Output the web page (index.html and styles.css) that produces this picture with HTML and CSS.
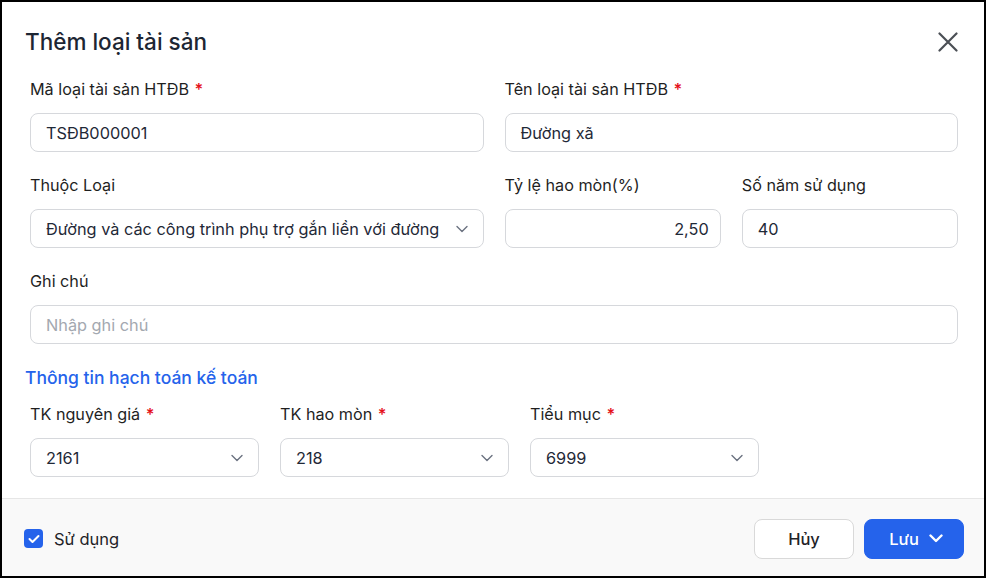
FILE: index.html
```html
<!DOCTYPE html>
<html lang="vi">
<head>
<meta charset="utf-8">
<title>Thêm loại tài sản</title>
<link rel="stylesheet" href="styles.css">
</head>
<body>
<div class="dialog">
  <div class="dlg-head">
    <h1 class="dlg-title">Thêm loại tài sản</h1>
    <span class="dlg-close">
      <svg width="20" height="20" viewBox="0 0 20 20"><path d="M1.5 1.5L18.5 18.5M18.5 1.5L1.5 18.5" stroke="#4b4f55" stroke-width="2.2" stroke-linecap="round"/></svg>
    </span>
  </div>

  <div class="dlg-body">
    <div class="grid4">
      <div class="field span2">
        <label class="lbl">Mã loại tài sản HTĐB <i class="req">*</i></label>
        <div class="inp">TSĐB000001</div>
      </div>
      <div class="field span2">
        <label class="lbl">Tên loại tài sản HTĐB <i class="req">*</i></label>
        <div class="inp">Đường xã</div>
      </div>

      <div class="field span2">
        <label class="lbl">Thuộc Loại</label>
        <div class="inp sel">
          <span>Đường và các công trình phụ trợ gắn liền với đường</span>
          <svg class="chev" width="12" height="8" viewBox="0 0 12 8"><path d="M1 1.5L6 6.5L11 1.5" fill="none" stroke="#6b7280" stroke-width="1.4" stroke-linecap="round" stroke-linejoin="round"/></svg>
        </div>
      </div>
      <div class="field">
        <label class="lbl">Tỷ lệ hao mòn(%)</label>
        <div class="inp num">2,50</div>
      </div>
      <div class="field">
        <label class="lbl">Số năm sử dụng</label>
        <div class="inp">40</div>
      </div>

      <div class="field span4">
        <label class="lbl">Ghi chú</label>
        <div class="inp ph">Nhập ghi chú</div>
      </div>
    </div>

    <h2 class="sec-title">Thông tin hạch toán kế toán</h2>

    <div class="row3">
      <div class="field">
        <label class="lbl">TK nguyên giá <i class="req">*</i></label>
        <div class="inp sel">
          <span>2161</span>
          <svg class="chev" width="12" height="8" viewBox="0 0 12 8"><path d="M1 1.5L6 6.5L11 1.5" fill="none" stroke="#6b7280" stroke-width="1.4" stroke-linecap="round" stroke-linejoin="round"/></svg>
        </div>
      </div>
      <div class="field">
        <label class="lbl">TK hao mòn <i class="req">*</i></label>
        <div class="inp sel">
          <span>218</span>
          <svg class="chev" width="12" height="8" viewBox="0 0 12 8"><path d="M1 1.5L6 6.5L11 1.5" fill="none" stroke="#6b7280" stroke-width="1.4" stroke-linecap="round" stroke-linejoin="round"/></svg>
        </div>
      </div>
      <div class="field">
        <label class="lbl">Tiểu mục <i class="req">*</i></label>
        <div class="inp sel">
          <span>6999</span>
          <svg class="chev" width="12" height="8" viewBox="0 0 12 8"><path d="M1 1.5L6 6.5L11 1.5" fill="none" stroke="#6b7280" stroke-width="1.4" stroke-linecap="round" stroke-linejoin="round"/></svg>
        </div>
      </div>
    </div>
  </div>

  <div class="dlg-foot">
    <label class="chk">
      <span class="box">
        <svg width="12" height="10" viewBox="0 0 12 10"><path d="M1.5 5L4.5 8L10.5 2" fill="none" stroke="#fff" stroke-width="2" stroke-linecap="round" stroke-linejoin="round"/></svg>
      </span>
      Sử dụng
    </label>
    <div class="btns">
      <button class="btn">Hủy</button>
      <button class="btn primary">Lưu
        <svg width="14" height="9" viewBox="0 0 14 9"><path d="M1.5 1.5L7 7L12.5 1.5" fill="none" stroke="#fff" stroke-width="2.4" stroke-linecap="round" stroke-linejoin="round"/></svg>
      </button>
    </div>
  </div>
</div>
</body>
</html>
```

FILE: styles.css
```css
*{ margin:0; padding:0; box-sizing:border-box;}
body{ font-family:Inter, "Noto Sans", sans-serif; color:#1f2328; background:#fff;}

.dialog{ width:986px; height:578px; border:2px solid #000; background:#fff; display:flex; flex-direction:column;}

/* tiêu đề */
.dlg-head{ display:flex; justify-content:space-between; align-items:center; padding:25px 26px 0 23px; height:55px;}
.dlg-title{ font-size:22.5px; font-weight:500; line-height:28px; color:#1d2633;}
.dlg-close{ display:flex; margin-top:-1px; margin-right:0;}

/* form */
.dlg-body{ padding:21px 26px 0 28px; flex:1;}
.grid4{ display:grid; grid-template-columns:repeat(4,1fr); column-gap:21px; row-gap:22px;}
.span2{ grid-column:span 2;}
.span4{ grid-column:span 4;}
.field{ display:flex; flex-direction:column; gap:13px;}
.lbl{ font-size:16.2px; line-height:22px; color:#1f1f1f;}
.req{ font-style:normal; color:#e5121b; margin-left:1px; font-weight:600;}

.inp{ height:39px; border:1px solid #d6d8dc; border-radius:8px; padding:0 15px; display:flex; align-items:center; font-size:16.3px; color:#1f2937; background:#fff;}
.inp.num{ justify-content:flex-end; padding-right:11px;}
.inp.ph{ color:#a3a8b0;}
.inp.sel{ justify-content:space-between; padding-right:15px;}
.inp.sel span{ white-space:nowrap; overflow:hidden;}
.chev{ flex:none;}

.sec-title{ font-size:17.5px; font-weight:500; line-height:24px; color:#2563eb; margin:22px 0 13px -5px;}

.row3{ display:flex; gap:21px;}
.row3 .field{ width:229px;}

/* chân */
.dlg-foot{ height:78px; background:#f9f9f9; border-top:1px solid #e6e6e6; display:flex; align-items:center; justify-content:space-between; padding:2px 20px 0 22px;}
.chk{ display:flex; align-items:center; gap:11px; font-size:16.5px; color:#1f2328;}
.chk .box{ width:19px; height:19px; border-radius:4px; background:#2563eb; display:flex; align-items:center; justify-content:center;}
.btns{ display:flex; gap:10px;}
.btn{ width:100px; height:40px; border-radius:8px; border:1px solid #d9d9d9; background:#fff; font-family:Inter, "Noto Sans", sans-serif; font-size:16.5px; font-weight:500; color:#1f2328; display:flex; align-items:center; justify-content:center; gap:10px;}
.btn.primary{ background:#2563eb; border-color:#2563eb; color:#fff; padding-left:4px;}
```
